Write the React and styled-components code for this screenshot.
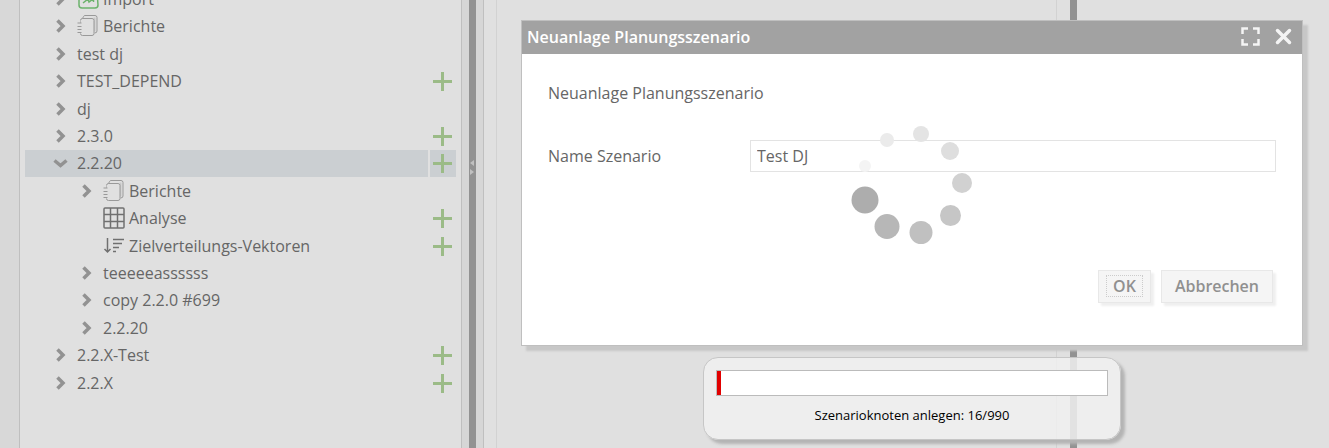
import React, { useState } from "react";
import styled, { createGlobalStyle, css } from "styled-components";

const GlobalStyle = createGlobalStyle`
  * {
    box-sizing: border-box;
  }

  body {
    margin: 0;
    background-color: #d8d8d8;
    color: #666;
    font-family: "Open Sans", "Noto Sans", sans-serif;
    font-size: 16px;
  }
`;

const treeItems = [
  { id: "import", label: "Import", level: 0, arrow: "right", icon: "import" },
  { id: "berichte", label: "Berichte", level: 0, arrow: "right", icon: "report" },
  { id: "testdj", label: "test dj", level: 0, arrow: "right" },
  { id: "depend", label: "TEST_DEPEND", level: 0, arrow: "right", add: true },
  { id: "dj", label: "dj", level: 0, arrow: "right" },
  { id: "230", label: "2.3.0", level: 0, arrow: "right", add: true },
  { id: "2220", label: "2.2.20", level: 0, arrow: "down", add: true },
  { id: "berichte2", label: "Berichte", level: 1, arrow: "right", icon: "report" },
  { id: "analyse", label: "Analyse", level: 1, icon: "grid", add: true },
  { id: "vektoren", label: "Zielverteilungs-Vektoren", level: 1, icon: "sort", add: true },
  { id: "tee", label: "teeeeeassssss", level: 1, arrow: "right" },
  { id: "copy", label: "copy 2.2.0 #699", level: 1, arrow: "right" },
  { id: "2220b", label: "2.2.20", level: 1, arrow: "right" },
  { id: "22xtest", label: "2.2.X-Test", level: 0, arrow: "right", add: true },
  { id: "22x", label: "2.2.X", level: 0, arrow: "right", add: true },
];

const spinnerDots = [
  { x: 45, y: 56, r: 6, fill: "#f4f4f4" },
  { x: 67, y: 30, r: 7, fill: "#ebebeb" },
  { x: 101, y: 24, r: 8, fill: "#e4e4e4" },
  { x: 130, y: 41, r: 9, fill: "#dedede" },
  { x: 142, y: 73, r: 10, fill: "#d1d1d1" },
  { x: 130.5, y: 105.5, r: 10.5, fill: "#c6c6c6" },
  { x: 101, y: 122.5, r: 11.5, fill: "#c0c0c0" },
  { x: 67, y: 116.5, r: 12.5, fill: "#b7b7b7" },
  { x: 45, y: 90, r: 13.5, fill: "#adadad" },
];

const Arrow = ({ direction }) => (
  <svg width="16" height="16" viewBox="0 0 16 16" fill="none" stroke="#929292" strokeWidth="3.5">
    {direction === "down" ? (
      <path d="M2.5 5.5 8.500 10.500l6-5" />
    ) : (
      <path d="M5.500 2.500 11 8 5.500 13.500" />
    )}
  </svg>
);

const ReportIcon = () => (
  <svg width="22" height="22" viewBox="0 0 22 22" fill="none" stroke="#999" strokeWidth="1">
    <path d="M16.500 2.500H18.500V16.500H17V5.500z" fill="#c9c9c9" stroke="none" />
    <path d="M5.500 3.500 6.500 1.500Q7 .5 8 .5h10q2 0 2 2V16q0 2-2.500 2" />
    <path d="M3.500 5.500q0-2 2-2h9.500q2 0 2 2V18.500q0 2-2 2H5.500q-2 0-2-2" />
    <path d="M3.500 5v3M3.500 17v2" stroke="#bbb" />
    <path d="M0.500 8h4M0.500 11.500h4M0.500 14.500h4M0.500 17.500h4" />
  </svg>
);

const ImportIcon = () => (
  <svg width="22" height="22" viewBox="0 0 22 22" fill="none" stroke="#6cb26c" strokeWidth="1.500">
    <path d="M2 3h18l1 14q0 3-3 3H5q-3 0-3-3z" />
    <path d="M6 15l5-4 1 3 4-3M13 11h3.500v3" />
  </svg>
);

const GridIcon = () => (
  <svg width="22" height="22" viewBox="0 0 22 22" fill="none" stroke="#707070" strokeWidth="1.500">
    <rect x="1" y="1" width="20" height="20" rx="1" />
    <path d="M7.500 1v20M14.500 1v20M1 7.500h20M1 14.500h20" />
  </svg>
);

const SortIcon = () => (
  <svg width="22" height="22" viewBox="0 0 22 22" fill="none" stroke="#707070" strokeWidth="1.500">
    <path d="M4.500 3v14M1.500 14l3 3 3-3" />
    <path d="M10 4.500h11M10 8.500h9M10 12.500h6M10 16.500h3" />
  </svg>
);

const icons = {
  import: ImportIcon,
  report: ReportIcon,
  grid: GridIcon,
  sort: SortIcon,
};

const TreeItem = ({ item, selected, onSelect }) => {
  const Icon = icons[item.icon];

  return (
    <StyledRow>
      <StyledNode $level={item.level} $selected={selected} onClick={onSelect}>
        <StyledSlot>{item.arrow && <Arrow direction={item.arrow} />}</StyledSlot>
        {Icon && (
          <StyledIcon>
            <Icon />
          </StyledIcon>
        )}
        {item.label}
      </StyledNode>
      {item.add && (
        <StyledAdd $selected={selected} aria-label={`${item.label} +`}>
          <svg width="19" height="19" viewBox="0 0 19 19" stroke="#9bbb87" strokeWidth="3">
            <path d="M9.500 0v19M0 9.500h19" />
          </svg>
        </StyledAdd>
      )}
    </StyledRow>
  );
};

const Spinner = () => (
  <StyledSpinner width="184" height="146" viewBox="0 0 184 146">
    {spinnerDots.map((dot) => (
      <circle key={dot.r} cx={dot.x} cy={dot.y} r={dot.r} fill={dot.fill} />
    ))}
  </StyledSpinner>
);

const App = () => {
  const [selected, setSelected] = useState("2220");
  const [name, setName] = useState("Test DJ");
  const done = 16;
  const total = 990;

  return (
    <StyledPage>
      <GlobalStyle />
      <StyledSidebar>
        <StyledTree>
          {treeItems.map((item) => (
            <TreeItem
              key={item.id}
              item={item}
              selected={item.id === selected}
              onSelect={() => setSelected(item.id)}
            />
          ))}
        </StyledTree>
      </StyledSidebar>
      <StyledSplitter>
        <StyledBar>
          <svg width="7" height="16" viewBox="0 0 7 16" fill="#c0c0c0">
            <path d="M5 0v6L1 3zM1 9v6l4-3z" />
          </svg>
        </StyledBar>
      </StyledSplitter>
      <StyledContent>
        <StyledPane />
        <StyledBar />
        <StyledOverlay>
          <StyledDialog role="dialog" aria-labelledby="dialog-title">
            <StyledHeader>
              <StyledTitle id="dialog-title">Neuanlage Planungsszenario</StyledTitle>
              <StyledHeaderButton aria-label="Maximieren">
                <svg width="19" height="19" viewBox="0 0 19 19" fill="none" stroke="#f4f4f4" strokeWidth="2.5">
                  <path d="M7 1.500H1.500V7M12 1.500h5.500V7M7 17.500H1.500V12M12 17.500h5.500V12" />
                </svg>
              </StyledHeaderButton>
              <StyledHeaderButton aria-label="Schließen">
                <svg width="19" height="19" viewBox="0 0 19 19" stroke="#f4f4f4" strokeWidth="3.5" strokeLinecap="round">
                  <path d="M3.500 3.500l12 12M15.500 3.500l-12 12" />
                </svg>
              </StyledHeaderButton>
            </StyledHeader>
            <StyledBody>
              <StyledText>Neuanlage Planungsszenario</StyledText>
              <StyledField>
                <StyledLabel htmlFor="name">Name Szenario</StyledLabel>
                <StyledInput id="name" value={name} onChange={(e) => setName(e.target.value)} />
              </StyledField>
              <StyledFooter>
                <StyledButton $focused>
                  <span>OK</span>
                </StyledButton>
                <StyledButton>
                  <span>Abbrechen</span>
                </StyledButton>
              </StyledFooter>
            </StyledBody>
            <Spinner />
          </StyledDialog>
          <StyledProgress>
            <StyledTrack>
              <StyledFill style={{ width: `${Math.floor((done / total) * 100)}%` }} />
            </StyledTrack>
            <StyledStatus>
              Szenarioknoten anlegen: {done}/{total}
            </StyledStatus>
          </StyledProgress>
        </StyledOverlay>
      </StyledContent>
    </StyledPage>
  );
};

const StyledPage = styled.div`
  display: grid;
  grid-template-columns: 443px 21px 1fr;
  min-height: 100vh;
  padding-left: 19px;
`;

const StyledSidebar = styled.aside`
  overflow: hidden;
  padding-left: 5px;
  padding-right: 5px;
  background-color: #e0e0e0;
  border-left: 1px solid #bfbfbf;
  border-right: 1px solid #bfbfbf;
`;

/* scrolled down by half a row */
const StyledTree = styled.ul`
  list-style: none;
  margin: -14px 0 0;
  padding: 0;
`;

const StyledRow = styled.li`
  display: flex;
  gap: 2px;
  height: 27px;

  &:nth-child(5n),
  &:nth-child(5n + 3) {
    margin-top: 1px;
  }
`;

const selectedRow = css`
  background-color: #cbcfd2;
`;

const StyledNode = styled.div`
  flex: 1;
  display: flex;
  align-items: center;
  padding-bottom: 2px;
  padding-left: ${(props) => (props.$level ? "53px" : "27px")};
  cursor: pointer;
  ${(props) => props.$selected && selectedRow}
`;

const StyledSlot = styled.span`
  display: flex;
  width: 25px;
`;

const StyledIcon = styled.span`
  display: flex;
  width: 26px;
`;

const StyledAdd = styled.button`
  display: flex;
  align-items: center;
  justify-content: center;
  width: 26px;
  padding: 0 2px 0 0;
  background: none;
  border: none;
  cursor: pointer;
  ${(props) => props.$selected && selectedRow}
`;

const StyledSplitter = styled.div`
  display: flex;
  justify-content: center;
  background-color: #d6d6d6;
`;

const StyledBar = styled.div`
  display: flex;
  align-items: center;
  width: 7px;
  padding-bottom: 112px;
  background-color: #929292;
`;

const StyledContent = styled.main`
  position: relative;
  display: flex;
  gap: 13px;
  padding-left: 12px;
  padding-right: 252px;
  background-color: #e0e0e0;
  border-left: 1px solid #bfbfbf;
`;

const StyledPane = styled.div`
  flex: 1;
  border-left: 1px solid #d2d2d2;
  border-right: 1px solid #d2d2d2;
`;

const StyledOverlay = styled.div`
  position: absolute;
  inset: 0;
  display: flex;
  flex-direction: column;
  align-items: center;
  gap: 11px;
  padding: 20px 26px 0 37px;
`;

const StyledDialog = styled.section`
  position: relative;
  width: 100%;
  background-color: #fff;
  border: 1px solid #bfbfbf;
  box-shadow: 5px 5px 2px #c7c7c7;
`;

const StyledHeader = styled.header`
  display: flex;
  align-items: center;
  gap: 14px;
  height: 33px;
  padding: 0 9px 2px 5px;
  background-color: #a2a2a2;
`;

const StyledTitle = styled.h1`
  flex: 1;
  margin: 0;
  color: #fff;
  font-size: 16px;
  font-weight: 600;
`;

const StyledHeaderButton = styled.button`
  display: flex;
  padding: 0;
  background: none;
  border: none;
  cursor: pointer;
`;

const StyledBody = styled.div`
  padding: 27px 26px 42px;
`;

const StyledText = styled.p`
  margin: 0 0 35px;
  line-height: 24px;
`;

const StyledField = styled.div`
  display: grid;
  grid-template-columns: 202px 1fr;
  align-items: center;
  margin-bottom: 98px;
`;

const StyledLabel = styled.label`
  line-height: 24px;
`;

const StyledInput = styled.input`
  width: 100%;
  height: 32px;
  padding: 0 6px;
  background-color: #fff;
  border: 1px solid #e3e3e3;
  color: #666;
  font: inherit;
  outline: none;
`;

const StyledFooter = styled.div`
  display: flex;
  justify-content: flex-end;
  gap: 10px;
  padding-right: 3px;
`;

const StyledButton = styled.button`
  height: 33px;
  padding: 0 ${(props) => (props.$focused ? "7px" : "8px")} 2px;
  background-color: #f5f5f5;
  border: 1px solid #e8e8e8;
  box-shadow: 3px 3px 2px #efefef;
  color: #909090;
  font: inherit;
  font-weight: 600;
  line-height: 20px;
  cursor: pointer;

  span {
    display: block;
    border: 1px dotted ${(props) => (props.$focused ? "#ccc" : "transparent")};
    padding: 0 ${(props) => (props.$focused ? "6px" : "4px")};
  }
`;

const StyledSpinner = styled.svg`
  position: absolute;
  top: 50%;
  left: 50%;
  transform: translate(-50%, -50%);
  pointer-events: none;
`;

const StyledProgress = styled.div`
  width: 418px;
  max-width: 100%;
  padding: 12px;
  background-color: rgba(240, 240, 240, 0.85);
  border: 1px solid #c6c6c6;
  border-radius: 15px;
  box-shadow: 4px 4px 3px #b4b4b4;
`;

const StyledTrack = styled.div`
  height: 26px;
  background-color: #fff;
  border: 1px solid #bbb;
`;

const StyledFill = styled.div`
  height: 100%;
  background-color: #e10000;
`;

const StyledStatus = styled.p`
  margin: 9px 0 2px;
  color: #000;
  font-size: 13px;
  line-height: 20px;
  text-align: center;
`;

export default App;
